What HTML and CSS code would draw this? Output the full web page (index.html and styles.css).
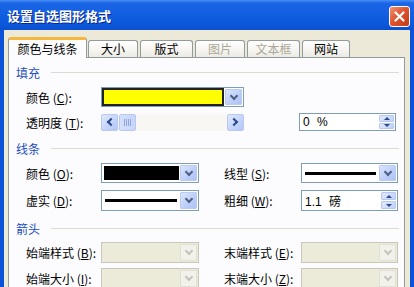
FILE: index.html
```html
<!DOCTYPE html>
<html lang="zh-CN">
<head>
    <meta charset="UTF-8">
    <meta name="viewport" content="width=device-width, initial-scale=1.0">
    <title>设置自选图形格式</title>
    <link rel="stylesheet" href="styles.css">
</head>
<body>
    <div class="window">
        <div class="titlebar">
            <span class="title">设置自选图形格式</span>
            <span class="close">
                <svg width="11" height="11" viewBox="0 0 11 11"><path d="M1.5 1.5 L9.5 9.5 M9.5 1.5 L1.5 9.5" stroke="#fff" stroke-width="2.2" stroke-linecap="round"/></svg>
            </span>
        </div>
        <div class="frame">
            <div class="dialog">
                <div class="tabs">
                    <div class="tab active">颜色与线条</div>
                    <div class="tab w50 after-active">大小</div>
                    <div class="tab w53">版式</div>
                    <div class="tab w50 disabled">图片</div>
                    <div class="tab w53 disabled">文本框</div>
                    <div class="tab w48">网站</div>
                </div>

                <div class="panel">
                    <!-- 填充 -->
                    <div class="group group-fill">
                        <div class="group-head"><span>填充</span><i class="rule"></i></div>
                        <div class="fields fill-fields">
                            <label class="label">颜色 (<u>C</u>):</label>
                            <div class="combo">
                                <span class="combo-value"><span class="swatch yellow"></span></span>
                                <span class="combo-btn"><i class="chev"></i></span>
                            </div>
                            <span></span>
                            <span></span>

                            <label class="label">透明度 (<u>T</u>):</label>
                            <div class="slider">
                                <span class="slider-btn"><i class="arrow left"></i></span>
                                <span class="thumb"><i class="grip"></i></span>
                                <span class="track"></span>
                                <span class="slider-btn"><i class="arrow right"></i></span>
                            </div>
                            <span></span>
                            <div class="spin small">
                                <span class="spin-value">0 %</span>
                                <span class="spin-btns"><i class="up"></i><i class="down"></i></span>
                            </div>
                        </div>
                    </div>

                    <!-- 线条 -->
                    <div class="group group-line">
                        <div class="group-head"><span>线条</span><i class="rule"></i></div>
                        <div class="fields line-fields">
                            <label class="label">颜色 (<u>O</u>):</label>
                            <div class="combo">
                                <span class="combo-value"><span class="swatch black"></span></span>
                                <span class="combo-btn"><i class="chev"></i></span>
                            </div>
                            <span></span>
                            <label class="label">线型 (<u>S</u>):</label>
                            <div class="combo">
                                <span class="combo-value"><span class="stroke"></span></span>
                                <span class="combo-btn"><i class="chev"></i></span>
                            </div>

                            <label class="label">虚实 (<u>D</u>):</label>
                            <div class="combo">
                                <span class="combo-value"><span class="stroke"></span></span>
                                <span class="combo-btn"><i class="chev"></i></span>
                            </div>
                            <span></span>
                            <label class="label">粗细 (<u>W</u>):</label>
                            <div class="spin">
                                <span class="spin-value">1.1 磅</span>
                                <span class="spin-btns"><i class="up"></i><i class="down"></i></span>
                            </div>
                        </div>
                    </div>

                    <!-- 箭头 -->
                    <div class="group group-arrow">
                        <div class="group-head"><span>箭头</span><i class="rule"></i></div>
                        <div class="fields line-fields">
                            <label class="label">始端样式 (<u>B</u>):</label>
                            <div class="combo off">
                                <span class="combo-value"></span>
                                <span class="combo-btn"><i class="chev"></i></span>
                            </div>
                            <span></span>
                            <label class="label">末端样式 (<u>E</u>):</label>
                            <div class="combo off">
                                <span class="combo-value"></span>
                                <span class="combo-btn"><i class="chev"></i></span>
                            </div>

                            <label class="label">始端大小 (<u>I</u>):</label>
                            <div class="combo off">
                                <span class="combo-value"></span>
                                <span class="combo-btn"><i class="chev"></i></span>
                            </div>
                            <span></span>
                            <label class="label">末端大小 (<u>Z</u>):</label>
                            <div class="combo off">
                                <span class="combo-value"></span>
                                <span class="combo-btn"><i class="chev"></i></span>
                            </div>
                        </div>
                    </div>
                </div>
            </div>
        </div>
    </div>
</body>
</html>
```

FILE: styles.css
```css
/* Página */
body {
    margin: 0;
    width: 414px;
    height: 287px;
    overflow: hidden;
    font-family: "Noto Sans CJK SC", "Liberation Sans", sans-serif;
    font-size: 12px;
    color: #000;
}

/* Ventana estilo XP */
.window {
    height: 287px;
    display: flex;
    flex-direction: column;
    background: #0b52d9;
}

.titlebar {
    height: 30px;
    flex: none;
    display: flex;
    align-items: center;
    padding: 0 4px 0 7px;
    background: linear-gradient(#4a8ff7 0, #1b66e6 3px, #1460e2 40%, #0c58dc 80%, #0a4fce 100%);
}

.title {
    flex: 1;
    color: #fff;
    font-size: 13px;
    font-weight: bold;
    text-shadow: 1px 1px #0c2a8e;
}

.close {
    width: 21px;
    height: 21px;
    box-sizing: border-box;
    margin-top: 3px;
    border: 1px solid #fff;
    border-radius: 3px;
    background: linear-gradient(135deg, #f0937a, #de5530 45%, #c23b16);
    display: flex;
    align-items: center;
    justify-content: center;
}

.frame {
    flex: 1;
    display: flex;
    flex-direction: column;
    padding: 0 4px;
    min-height: 0;
}

.dialog {
    flex: 1;
    display: flex;
    flex-direction: column;
    background: #ece9d8;
}

/* Pestañas */
.tabs {
    height: 20px;
    margin-top: 7px;
    padding-left: 4px;
    display: flex;
    align-items: flex-end;
}

.tab {
    height: 17px;
    box-sizing: border-box;
    margin-left: 2px;
    border: 1px solid #919b9c;
    border-bottom: none;
    border-radius: 3px 3px 0 0;
    background: linear-gradient(#fff, #f5f4f0 60%, #ebeae3);
    text-align: center;
    line-height: 16px;
}

.tab.active {
    width: 79px;
    height: 21px;
    margin-left: 0;
    margin-bottom: -1px;
    position: relative;
    z-index: 1;
    border-top: 3px solid #f5b73c;
    background: #fcfcfe;
    line-height: 17px;
}

.tab.after-active { margin-left: 1px; }
.tab.w48 { width: 48px; }
.tab.w50 { width: 50px; }
.tab.w53 { width: 53px; }
.tab.disabled { color: #aca899; }

/* Panel */
.panel {
    flex: 1;
    margin: 0 5px 0 4px;
    padding: 6px 0 0 7px;
    border: 1px solid #919b9c;
    border-bottom: none;
    background: #fcfcfe;
}

.group-head {
    height: 16px;
    display: flex;
    align-items: center;
    color: #1f4ec0;
}

.group-head .rule {
    flex: 1;
    height: 1px;
    margin: 0 5px 0 11px;
    background: #dcdbd0;
}

.fields {
    margin-left: 10px;
    display: grid;
    grid-auto-rows: 20px;
    align-items: center;
}

.fill-fields { grid-template-columns: 75px 143px 55px 97px; }
.line-fields { grid-template-columns: 75px 98px 25px 77px 97px; }

.group-fill { margin-bottom: 8px; }
.group-fill .fields { margin-top: 7px; row-gap: 5px; }
.group-line { margin-bottom: 9px; }
.group-line .fields { margin-top: 7px; row-gap: 7px; grid-auto-rows: 20px 21px; }
.group-arrow .fields { margin-top: 6px; row-gap: 5px; grid-auto-rows: 21px; }

.label { white-space: nowrap; }

/* Listas desplegables */
.combo {
    height: 100%;
    box-sizing: border-box;
    display: flex;
    border: 1px solid #7f9db9;
    background: #fff;
}

.combo-value {
    flex: 1;
    display: flex;
    align-items: center;
    min-width: 0;
}

.combo-btn {
    width: 15px;
    margin: 1px;
    border: 1px solid #b9cbf3;
    border-radius: 1px;
    background: linear-gradient(135deg, #dbe5fd, #bccdf8 60%, #aec3f5);
    display: flex;
    align-items: center;
    justify-content: center;
}

.chev {
    width: 4px;
    height: 4px;
    margin-top: -3px;
    border-right: 2px solid #4d6185;
    border-bottom: 2px solid #4d6185;
    transform: rotate(45deg);
}

.swatch {
    align-self: stretch;
    flex: 1;
}

.swatch.yellow {
    border: 2px solid #222;
    background: #ffff00;
}

.swatch.black {
    margin: 2px 0 2px 2px;
    background: #000;
}

.stroke {
    flex: 1;
    height: 3px;
    margin: 0 2px 0 3px;
    background: #000;
}

.combo.off {
    border-color: #c9c7ba;
    background: #ecead9;
}

.combo.off .combo-btn {
    border-color: #e2e0d4;
    background: #f3f2ea;
}

.combo.off .chev {
    border-color: #c5c4bc;
}

/* Deslizador de transparencia */
.slider {
    height: 17px;
    display: flex;
    background: #f8f7f3;
}

.slider-btn {
    width: 15px;
    border: 1px solid #b7c9f3;
    border-radius: 2px;
    background: linear-gradient(135deg, #e1e9fd, #c3d3fa 60%, #b2c6f5);
    display: flex;
    align-items: center;
    justify-content: center;
}

.arrow {
    width: 4px;
    height: 4px;
    border-right: 2px solid #2d4a8a;
    border-bottom: 2px solid #2d4a8a;
}

.arrow.left { transform: rotate(135deg); margin-left: 3px; }
.arrow.right { transform: rotate(-45deg); margin-right: 3px; }

.thumb {
    width: 15px;
    margin-left: 1px;
    border: 1px solid #b7c9f3;
    border-radius: 2px;
    background: linear-gradient(90deg, #d5e0fc, #c6d5fa);
    display: flex;
    align-items: center;
    justify-content: center;
}

.grip {
    width: 7px;
    height: 7px;
    background: repeating-linear-gradient(90deg, #8ea6dc 0 1px, transparent 1px 2px);
}

.track { flex: 1; }

/* Campos numéricos */
.spin {
    height: 100%;
    box-sizing: border-box;
    display: flex;
    border: 1px solid #7f9db9;
    background: #fff;
}

.spin.small { height: 18px; }

.spin-value {
    flex: 1;
    padding-left: 3px;
    display: flex;
    align-items: center;
    font-family: "Liberation Sans", "Noto Sans CJK SC", sans-serif;
    word-spacing: 4px;
}

.spin-btns {
    width: 15px;
    margin: 1px;
    display: flex;
    flex-direction: column;
    gap: 1px;
}

.spin-btns i {
    flex: 1;
    border: 1px solid #b7c9f3;
    border-radius: 1px;
    background: linear-gradient(135deg, #e1e9fd, #bfd0f9);
    display: flex;
    align-items: center;
    justify-content: center;
}

.spin-btns i::after {
    content: "";
    border-left: 3px solid transparent;
    border-right: 3px solid transparent;
}

.spin-btns .up::after { border-bottom: 3px solid #2d4a8a; }
.spin-btns .down::after { border-top: 3px solid #2d4a8a; }
```
